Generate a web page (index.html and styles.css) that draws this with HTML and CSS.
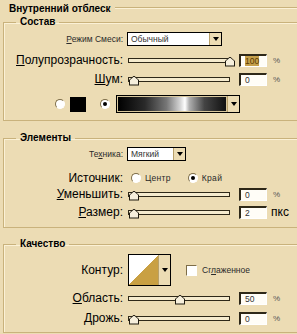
FILE: index.html
```html
<!DOCTYPE html>
<html>
<head>
  <meta charset="UTF-8" />
  <title>Внутренний отблеск</title>
  <link rel="stylesheet" href="styles.css">
</head>

<body>
  <div class="panel">
    <div class="head">Внутренний отблеск</div>

    <fieldset class="group g-sostav">
      <legend>Состав</legend>

      <div class="row r-mode">
        <span class="lbl small"><u>Р</u>ежим Смеси:</span>
        <div class="select s-mode"><span class="val">Обычный</span><span class="arrow"></span></div>
      </div>

      <div class="row r-opacity">
        <span class="lbl"><u>П</u>олупрозрачность:</span>
        <div class="slider"><span class="thumb" style="left: 96%"></span></div>
        <div class="num"><span class="sel">100</span></div>
        <span class="unit">%</span>
      </div>

      <div class="row r-noise">
        <span class="lbl"><u>Ш</u>ум:</span>
        <div class="slider"><span class="thumb" style="left: 0%"></span></div>
        <div class="num">0</div>
        <span class="unit">%</span>
      </div>

      <div class="row r-fill">
        <span class="radio"></span>
        <span class="swatch"></span>
        <span class="radio on"></span>
        <div class="grad-pick"><span class="grad"></span><span class="arrow"></span></div>
      </div>
    </fieldset>

    <fieldset class="group g-elements">
      <legend>Элементы</legend>

      <div class="row r-tech">
        <span class="lbl small">Те<u>х</u>ника:</span>
        <div class="select s-tech"><span class="val">Мягкий</span><span class="arrow"></span></div>
      </div>

      <div class="row r-source">
        <span class="lbl">Источник:</span>
        <span class="radio"></span>
        <span class="opt small opt-center">Центр</span>
        <span class="radio on"></span>
        <span class="opt small">Край</span>
      </div>

      <div class="row r-choke">
        <span class="lbl"><u>У</u>меньшить:</span>
        <div class="slider"><span class="thumb" style="left: 0%"></span></div>
        <div class="num">0</div>
        <span class="unit">%</span>
      </div>

      <div class="row r-size">
        <span class="lbl"><u>Р</u>азмер:</span>
        <div class="slider"><span class="thumb" style="left: 0%"></span></div>
        <div class="num">2</div>
        <span class="unit big">пкс</span>
      </div>
    </fieldset>

    <fieldset class="group g-quality">
      <legend>Качество</legend>

      <div class="row r-contour">
        <span class="lbl">Контур:</span>
        <div class="contour-pick"><span class="contour"></span><span class="arrow"></span></div>
        <span class="check"></span>
        <span class="opt small">Сг<u>л</u>аженное</span>
      </div>

      <div class="row r-range">
        <span class="lbl"><u>О</u>бласть:</span>
        <div class="slider"><span class="thumb" style="left: 46%"></span></div>
        <div class="num">50</div>
        <span class="unit">%</span>
      </div>

      <div class="row r-jitter">
        <span class="lbl"><u>Д</u>рожь:</span>
        <div class="slider"><span class="thumb" style="left: 0%"></span></div>
        <div class="num">0</div>
        <span class="unit">%</span>
      </div>
    </fieldset>
  </div>
</body>
</html>
```

FILE: styles.css
```css
html, body {
  margin: 0;
  height: 100%;
}

body {
  background: #ecdcb4;
  color: #000;
  font-family: "Liberation Sans", Arial, sans-serif;
  overflow: hidden;
}

.panel {
  overflow: hidden;
}

/* outer title with the line running right */
.head {
  display: flex;
  align-items: center;
  height: 16px;
  padding-left: 9px;
  font-size: 10px;
  font-weight: bold;
}

.head::after {
  content: "";
  flex: 1;
  margin-left: 4px;
  border-top: 1px solid #c9b27c;
  border-bottom: 1px solid #fbf1d6;
}

.group {
  margin: 0 -6px 0 3px;
  padding: 0;
  min-width: 0;
  border: 1px solid #c9b27c;
  box-shadow: inset 1px 1px 0 #fbf1d6;
}

.group legend {
  margin-left: 12px;
  padding: 0 4px;
  font-size: 10px;
  line-height: 12px;
  font-weight: bold;
}

.g-sostav {
  padding: 4px 0 7px;
}

.g-elements {
  margin-top: 11px;
  padding: 3px 0 8px;
}

.g-quality {
  margin-top: 10px;
  padding: 4px 0 7px;
}

.row {
  display: flex;
  align-items: center;
  height: 14px;
}

.lbl {
  width: 119px;
  margin-right: 5px;
  text-align: right;
  font-size: 12px;
  white-space: nowrap;
}

.small {
  font-size: 8.5px;
  color: #2a2a2a;
}

.lbl.small {
  margin-right: 4px;
}

.r-opacity { margin-top: 7px; }
.r-noise { margin-top: 5px; }
.r-fill { margin-top: 9px; height: 18px; padding-left: 51px; }
.r-source { margin-top: 10px; }
.r-choke { margin-top: 2px; }
.r-size { margin-top: 4px; }
.r-contour { height: 32px; }
.r-range { margin-top: 5px; }
.r-jitter { margin-top: 6px; }

/* dropdowns */
.select {
  display: flex;
  height: 12px;
  border: 1px solid #000;
  background: #fff;
}

.s-mode { width: 93px; }
.s-tech { width: 57px; }

.select .val {
  flex: 1;
  padding-left: 3px;
  font-size: 8.5px;
  line-height: 12px;
  color: #333;
}

.arrow {
  position: relative;
  width: 11px;
  background: #ecdcb4;
  border-left: 1px solid #b8a06a;
}

.arrow::after {
  content: "";
  position: absolute;
  left: 50%;
  top: 50%;
  margin: -2px 0 0 -3px;
  border-left: 3px solid transparent;
  border-right: 3px solid transparent;
  border-top: 4px solid #000;
}

/* sliders */
.slider {
  position: relative;
  width: 102px;
  height: 5px;
  box-sizing: border-box;
  border: 1px solid #2e2818;
  background: #f5ebce;
}

.thumb {
  position: absolute;
  top: -2px;
  width: 10px;
  height: 10px;
  background: #1e1a10;
  clip-path: polygon(0 100%, 0 45%, 50% 0, 100% 45%, 100% 100%);
}

.thumb::after {
  content: "";
  position: absolute;
  inset: 1px 1px 1px 1px;
  background: #f6efdc;
  clip-path: polygon(0 100%, 0 45%, 50% 0, 100% 45%, 100% 100%);
}

.num {
  width: 28px;
  height: 13px;
  margin-left: 9px;
  box-sizing: border-box;
  padding-left: 4px;
  border-top: 2px solid #2e2818;
  border-left: 2px solid #2e2818;
  border-right: 1px solid #fff;
  border-bottom: 1px solid #fff;
  background: #fffdf7;
  font-size: 8.5px;
  line-height: 10px;
  color: #333;
}

.num .sel {
  background: #c5a04c;
  color: #5a3a00;
}

.unit {
  margin-left: 6px;
  font-size: 8px;
  color: #555;
}

.unit.big {
  margin-left: 4px;
  font-size: 12px;
  color: #000;
}

/* radios and check */
.radio {
  width: 10px;
  height: 10px;
  box-sizing: border-box;
  border-radius: 50%;
  border: 1px solid;
  border-color: #7d6d48 #fff #fff #7d6d48;
  background: #fff;
  position: relative;
}

.radio.on::after {
  content: "";
  position: absolute;
  left: 2px;
  top: 2px;
  width: 4px;
  height: 4px;
  border-radius: 50%;
  background: #000;
}

.r-source .radio { margin-left: 3px; }
.r-source .opt { margin-left: 4px; letter-spacing: 0.3px; }
.r-source .opt-center { margin-right: 14px; }

.swatch {
  width: 16px;
  height: 15px;
  margin: 0 14px 0 5px;
  background: #000;
}

.grad-pick {
  display: flex;
  width: 124px;
  height: 18px;
  margin-left: 6px;
  box-sizing: border-box;
  border: 1px solid #000;
  background: #000;
}

.grad {
  flex: 1;
  border: 1px solid #d8c79c;
  background: linear-gradient(90deg, #000 0%, #2a2a2a 25%, #777 45%, #d8d8d8 58%, #fff 62%, #b0b0b0 66%, #444 80%, #111 100%);
}

.contour-pick {
  display: flex;
  height: 32px;
  box-sizing: border-box;
  border: 1px solid #000;
}

.contour {
  width: 29px;
  background: linear-gradient(to top left, #c9a043 50%, #fff 50%);
}

.check {
  width: 11px;
  height: 11px;
  margin: 0 5px 0 15px;
  box-sizing: border-box;
  border: 1px solid;
  border-color: #7d6d48 #fff #fff #7d6d48;
  background: #fff;
}
```
